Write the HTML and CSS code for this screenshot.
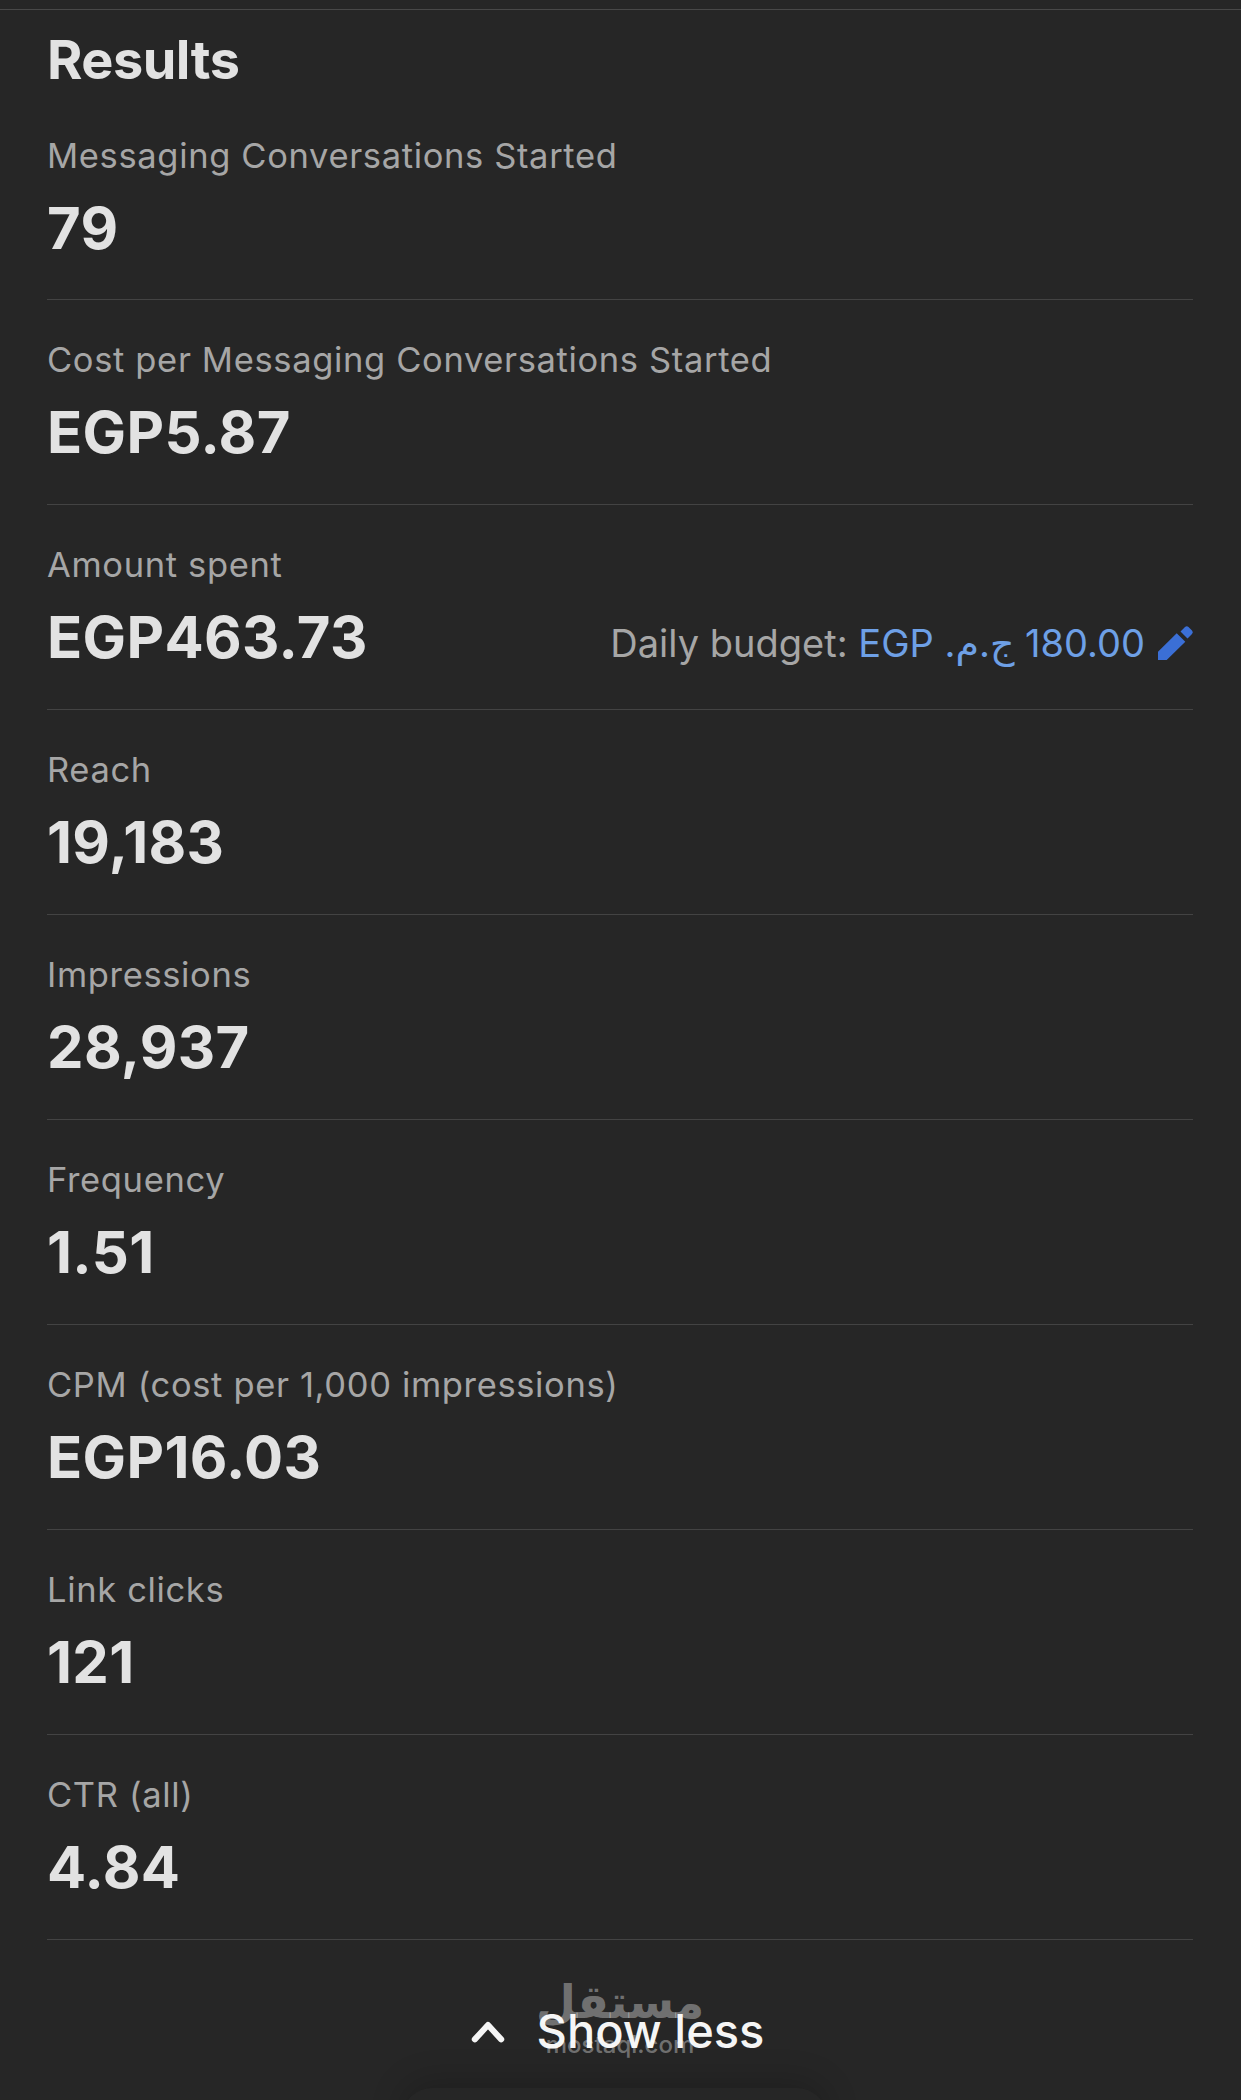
FILE: index.html
```html
<!DOCTYPE html>
<html lang="en">
<head>
  <meta charset="UTF-8" />
  <title>Results</title>
  <link rel="stylesheet" href="styles.css">
</head>
<body>
  <div class="top-line"></div>
  <div class="container">
    <h2>Results</h2>

    <div class="row">
      <p class="label">Messaging Conversations Started</p>
      <p class="value">79</p>
    </div>
    <div class="row">
      <p class="label">Cost per Messaging Conversations Started</p>
      <p class="value">EGP5.87</p>
    </div>
    <div class="row">
      <p class="label">Amount spent</p>
      <div class="value-line">
        <p class="value">EGP463.73</p>
        <p class="budget">Daily budget: <span class="link">EGP <bdi>ج.م.</bdi> 180.00</span>
          <svg class="pencil" viewBox="0 0 36 36"><path d="M0 35V26.7L18.7 8.3 27.3 16.7 8.7 35Z M22.5 6.5L27 2a2.5 2.5 0 0 1 3.5 0l3.5 3.5a2.5 2.5 0 0 1 0 3.5L29.5 13.5Z"/></svg>
        </p>
      </div>
    </div>
    <div class="row">
      <p class="label">Reach</p>
      <p class="value">19,183</p>
    </div>
    <div class="row">
      <p class="label">Impressions</p>
      <p class="value">28,937</p>
    </div>
    <div class="row">
      <p class="label">Frequency</p>
      <p class="value">1.51</p>
    </div>
    <div class="row">
      <p class="label">CPM (cost per 1,000 impressions)</p>
      <p class="value">EGP16.03</p>
    </div>
    <div class="row">
      <p class="label">Link clicks</p>
      <p class="value">121</p>
    </div>
    <div class="row">
      <p class="label">CTR (all)</p>
      <p class="value">4.84</p>
    </div>
  </div>

  <div class="show-less">
    <svg class="chevron" viewBox="0 0 28 20"><path d="M3 17L14 5 25 17"/></svg>
    <span>Show less</span>
    <div class="watermark">
      <span class="wm-ar">مستقل</span>
      <span class="wm-en">mostaql.com</span>
    </div>
  </div>
  <div class="home-bar"></div>
</body>
</html>
```

FILE: styles.css
```css
* {
  margin: 0;
  padding: 0;
  box-sizing: border-box;
  font-family: Inter, "DejaVu Sans", sans-serif;
}

html, body {
  height: 2100px;
  overflow: hidden;
}

body {
  background-color: #262626;
  color: #e2e2e2;
  position: relative;
}

.top-line {
  height: 1px;
  margin-top: 9px;
  background-color: #484848;
}

.container {
  padding: 0 48px 0 47px;
}

h2 {
  font-size: 54px;
  line-height: 60px;
  font-weight: 700;
  margin-top: 20px;
  letter-spacing: -0.5px;
}

.row {
  height: 205px;
  border-bottom: 1px solid #434343;
  padding-top: 39px;
}

.row:first-of-type {
  height: 210px;
  padding-top: 45px;
}

.label {
  font-size: 34.5px;
  line-height: 42px;
  letter-spacing: 0.65px;
  color: #a6a6a6;
}

.value {
  font-size: 58px;
  line-height: 70px;
  font-weight: 700;
  letter-spacing: 0.35px;
  margin-top: 16px;
}

.value-line {
  display: flex;
  justify-content: space-between;
  align-items: center;
}

.budget {
  font-size: 38px;
  color: #a6a6a6;
  margin-top: 27px;
  display: flex;
  align-items: center;
  white-space: pre;
}

.link {
  color: #6ea0e6;
}

.pencil {
  width: 36px;
  height: 36px;
  margin-left: 13px;
  margin-right: -1px;
  fill: #3b6fd6;
}

.show-less {
  position: relative;
  display: flex;
  justify-content: center;
  align-items: center;
  gap: 32px;
  margin-top: 62px;
  padding-right: 6px;
  font-size: 47px;
  font-weight: 500;
  color: #f5f5f5;
}

.chevron {
  width: 34px;
  height: 24px;
  fill: none;
  stroke: #f5f5f5;
  stroke-width: 5;
  stroke-linecap: round;
  stroke-linejoin: round;
}

.watermark {
  position: absolute;
  left: 520px;
  top: -33px;
  width: 200px;
  text-align: center;
  color: rgba(255,255,255,0.36);
}

.wm-ar {
  display: block;
  font-size: 46px;
  line-height: 64px;
  font-weight: 700;
}

.wm-en {
  display: block;
  font-size: 24px;
  line-height: 24px;
  font-weight: 500;
}

.home-bar {
  position: absolute;
  left: 402px;
  top: 2088px;
  width: 425px;
  height: 60px;
  border-radius: 44px;
  background-color: #262626;
  box-shadow: 0 -6px 34px rgba(0,0,0,0.2);
}
```
